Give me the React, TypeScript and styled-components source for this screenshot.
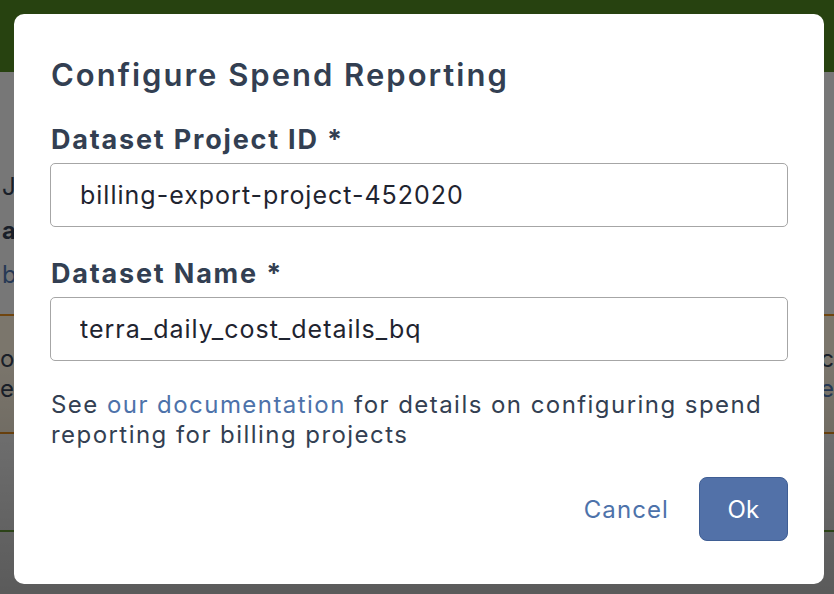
import React, { useState } from 'react';
import styled, { createGlobalStyle } from 'styled-components';

const GlobalStyle = createGlobalStyle`
  html, body {
    margin: 0;
    padding: 0;
    width: 834px;
    height: 594px;
    overflow: hidden;
  }
  body {
    font-family: Inter, "Noto Sans", "Liberation Sans", sans-serif;
    color: #333f52;
  }
`;

const Page = styled.div`
  position: relative;
  width: 834px;
  height: 594px;
  background: #eeeeee;
  overflow: hidden;
`;

const TopBar = styled.div`
  height: 72px;
  background: #4e8420;
`;

const PageBody = styled.div`
  display: flex;
  flex-direction: column;
  padding: 100px 0 0 0;
  font-size: 24px;
`;

const BgLine = styled.div<{ $bold?: boolean; $link?: boolean }>`
  height: 44px;
  padding-left: 2px;
  font-weight: ${(p) => (p.$bold ? 700 : 400)};
  color: ${(p) => (p.$link ? '#4d72aa' : '#333f52')};
  display: flex;
  justify-content: space-between;
`;

const NoticeBox = styled.div`
  margin-top: 10px;
  height: 116px;
  background: #f6ecd9;
  border-top: 2px solid #e08a1e;
  border-bottom: 2px solid #e08a1e;
  display: flex;
  flex-direction: column;
  justify-content: center;
  font-size: 24px;
  line-height: 30px;
`;

const NoticeRow = styled.div<{ $link?: boolean }>`
  display: flex;
  justify-content: space-between;
  color: ${(p) => (p.$link ? '#4d72aa' : '#333f52')};
`;

const GreenRule = styled.div`
  margin-top: 96px;
  height: 2px;
  background: #6aa23a;
`;

const Overlay = styled.div`
  position: absolute;
  inset: 0;
  background: linear-gradient(to bottom, rgba(0, 0, 0, 0.5) 0%, rgba(0, 0, 0, 0.5) 60%, rgba(0, 0, 0, 0.62) 100%);
`;

const Modal = styled.div`
  position: absolute;
  left: 14px;
  top: 14px;
  width: 810px;
  height: 570px;
  box-sizing: border-box;
  background: #ffffff;
  border-radius: 10px;
  padding: 43px 36px 0 37px;
  display: flex;
  flex-direction: column;
`;

const Title = styled.h1`
  margin: 0;
  font-size: 31px;
  line-height: 36px;
  font-weight: 600;
  letter-spacing: 2px;
  color: #333f52;
  white-space: nowrap;
`;

const Label = styled.label`
  display: block;
  margin-top: 30px;
  margin-bottom: 6px;
  font-size: 27px;
  line-height: 34px;
  font-weight: 700;
  letter-spacing: 1.8px;
  color: #333f52;
  white-space: nowrap;
`;

const TextInput = styled.input`
  box-sizing: border-box;
  width: 738px;
  height: 64px;
  margin-left: -1px;
  padding: 0 29px;
  border: 1px solid #a6a6a6;
  border-radius: 5px;
  font-family: inherit;
  font-size: 25px;
  letter-spacing: 1px;
  color: #1f2430;
  outline: none;
`;

const Help = styled.p`
  margin: 29px 0 0 0;
  font-size: 24px;
  line-height: 30px;
  letter-spacing: 1.45px;
  color: #333f52;
`;

const Link = styled.a`
  color: #4d72aa;
  text-decoration: none;
`;

const Actions = styled.div`
  margin-top: 27px;
  display: flex;
  justify-content: flex-end;
  align-items: center;
  gap: 30px;
`;

const Button = styled.button<{ $primary?: boolean }>`
  font-family: inherit;
  font-size: 24px;
  letter-spacing: ${(p) => (p.$primary ? '0.3px' : '1.1px')};
  height: 64px;
  padding: 0 ${(p) => (p.$primary ? '24px' : '0')};
  min-width: ${(p) => (p.$primary ? '89px' : '0')};
  border-radius: 8px;
  cursor: pointer;
  border: ${(p) => (p.$primary ? '1px solid #3f5e94' : 'none')};
  background: ${(p) => (p.$primary ? '#5271a8' : 'transparent')};
  color: ${(p) => (p.$primary ? '#ffffff' : '#4d72aa')};
`;

export default function App() {
  const [projectId, setProjectId] = useState('billing-export-project-452020');
  const [datasetName, setDatasetName] = useState('terra_daily_cost_details_bq');

  return (
    <>
      <GlobalStyle />
      <Page>
        <TopBar />
        <PageBody>
          <BgLine>JA<span>&nbsp;</span></BgLine>
          <BgLine $bold>af<span>&nbsp;</span></BgLine>
          <BgLine $link>b<span>&nbsp;</span></BgLine>
          <NoticeBox>
            <NoticeRow>
              <span>or</span>
              <span>c</span>
            </NoticeRow>
            <NoticeRow>
              <span>e</span>
              <Link>e</Link>
            </NoticeRow>
          </NoticeBox>
          <GreenRule />
        </PageBody>
        <Overlay />
        <Modal role="dialog" aria-labelledby="spend-title">
          <Title id="spend-title">Configure Spend Reporting</Title>
          <Label htmlFor="project-id">Dataset Project ID *</Label>
          <TextInput id="project-id" value={projectId} onChange={(e) => setProjectId(e.target.value)} />
          <Label htmlFor="dataset-name">Dataset Name *</Label>
          <TextInput id="dataset-name" value={datasetName} onChange={(e) => setDatasetName(e.target.value)} />
          <Help>
            See <Link href="#">our documentation</Link> for details on configuring spend reporting for billing projects
          </Help>
          <Actions>
            <Button type="button">Cancel</Button>
            <Button type="button" $primary>Ok</Button>
          </Actions>
        </Modal>
      </Page>
    </>
  );
}
